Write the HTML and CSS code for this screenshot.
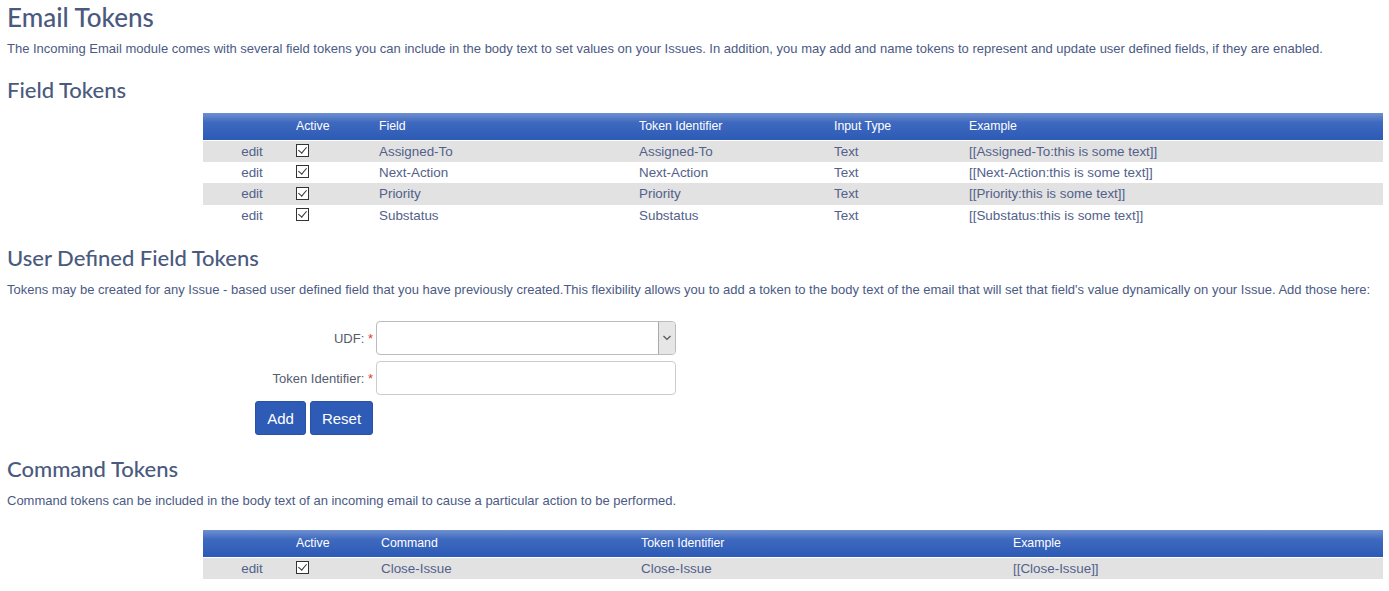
FILE: index.html
```html
<!DOCTYPE html>
<html>
<head>
<meta charset="utf-8">
<link rel="stylesheet" href="styles.css">
</head>
<body>
<div class="page">
  <h1 class="title">Email Tokens</h1>
  <p class="desc">The Incoming Email module comes with several field tokens you can include in the body text to set values on your Issues. In addition, you may add and name tokens to represent and update user defined fields, if they are enabled.</p>

  <h2 class="subtitle">Field Tokens</h2>
  <table class="grid grid-fields">
    <thead>
      <tr><th class="c-edit"></th><th class="c-active">Active</th><th class="c-field">Field</th><th class="c-token">Token Identifier</th><th class="c-type">Input Type</th><th>Example</th></tr>
    </thead>
    <tbody>
      <tr class="alt"><td class="c-edit">edit</td><td class="c-active"><span class="chk"></span></td><td>Assigned-To</td><td>Assigned-To</td><td>Text</td><td>[[Assigned-To:this is some text]]</td></tr>
      <tr><td class="c-edit">edit</td><td class="c-active"><span class="chk"></span></td><td>Next-Action</td><td>Next-Action</td><td>Text</td><td>[[Next-Action:this is some text]]</td></tr>
      <tr class="alt"><td class="c-edit">edit</td><td class="c-active"><span class="chk"></span></td><td>Priority</td><td>Priority</td><td>Text</td><td>[[Priority:this is some text]]</td></tr>
      <tr><td class="c-edit">edit</td><td class="c-active"><span class="chk"></span></td><td>Substatus</td><td>Substatus</td><td>Text</td><td>[[Substatus:this is some text]]</td></tr>
    </tbody>
  </table>

  <h2 class="subtitle sub-udf">User Defined Field Tokens</h2>
  <p class="desc">Tokens may be created for any Issue - based user defined field that you have previously created.This flexibility allows you to add a token to the body text of the email that will set that field's value dynamically on your Issue. Add those here:</p>

  <div class="form">
    <div class="form-row">
      <label class="lbl">UDF: <span class="req">*</span></label>
      <div class="select"><span class="select-btn"><svg width="10" height="6" viewBox="0 0 10 6"><path d="M1.5 1 L5 4.5 L8.5 1" fill="none" stroke="#555" stroke-width="1.2"/></svg></span></div>
    </div>
    <div class="form-row">
      <label class="lbl">Token Identifier: <span class="req">*</span></label>
      <div class="input"></div>
    </div>
    <div class="buttons">
      <button class="btn btn-add">Add</button>
      <button class="btn btn-reset">Reset</button>
    </div>
  </div>

  <h2 class="subtitle sub-cmd">Command Tokens</h2>
  <p class="desc">Command tokens can be included in the body text of an incoming email to cause a particular action to be performed.</p>

  <table class="grid grid-cmd">
    <thead>
      <tr><th class="c-edit"></th><th class="c-active2">Active</th><th class="c-cmd">Command</th><th class="c-token2">Token Identifier</th><th>Example</th></tr>
    </thead>
    <tbody>
      <tr class="alt"><td class="c-edit">edit</td><td class="c-active2"><span class="chk"></span></td><td>Close-Issue</td><td>Close-Issue</td><td>[[Close-Issue]]</td></tr>
    </tbody>
  </table>
</div>
</body>
</html>
```

FILE: styles.css
```css
* { box-sizing: border-box; }
html, body { margin: 0; padding: 0; background: #fff; }
body {
  font-family: "Liberation Sans", Arial, sans-serif;
  font-size: 13px;
  color: #4b5a85;
}
.page { padding: 0 7px; }
.title {
  font-family: Lato, "Liberation Sans", sans-serif;
  font-weight: 500;
  font-size: 26px;
  color: #4a5a7e;
  margin: 0;
  padding-top: 2px;
  line-height: 30px;
}
.subtitle {
  font-family: Lato, "Liberation Sans", sans-serif;
  font-weight: 500;
  font-size: 22px;
  color: #4a5a7e;
  margin: 0;
  line-height: 26px;
}
.desc {
  margin: 0;
  line-height: 16px;
  font-size: 13px;
  color: #4b5a85;
}
.title + .desc { margin-top: 9px; }
.desc + .subtitle { margin-top: 20px; }
.grid {
  border-collapse: collapse;
  width: 1180px;
  margin-left: 196px;
  font-size: 13.4px;
  color: #52618a;
}
.grid-fields { margin-top: 10px; }
.grid th {
  height: 27px;
  text-align: left;
  font-weight: normal;
  color: #fff;
  font-size: 12.3px;
  background: linear-gradient(to bottom, #6f90d0 0%, #3e69bf 35%, #2c5ab5 100%);
  background-clip: padding-box;
  padding: 0;
  border-bottom: 1px solid #fff;
}
.grid td {
  height: 21.5px;
  padding: 0;
  vertical-align: middle;
}
.grid tr.alt td { background: #e2e2e2; }
.grid td.c-edit, .grid th.c-edit { width: 93px; text-align: center; padding-left: 5px; }
.c-active { width: 83px; }
.c-field { width: 260px; }
.c-token { width: 195px; }
.c-type { width: 135px; }
.c-active2 { width: 85px; }
.c-cmd { width: 260px; }
.c-token2 { width: 372px; }
.chk {
  display: inline-block;
  width: 13px;
  height: 13px;
  border: 1px solid #333;
  background: #fff;
  position: relative;
  vertical-align: middle;
  margin-top: -3px;
}
.chk::after {
  content: "";
  position: absolute;
  left: 3px;
  top: 0px;
  width: 4px;
  height: 7px;
  border-right: 1.5px solid #333;
  border-bottom: 1.5px solid #333;
  transform: rotate(40deg);
}
.sub-udf { margin-top: 19px; }
.subtitle + .desc { margin-top: 11px; }
.form { margin-top: 23px; }
.form-row {
  display: flex;
  align-items: center;
  margin-bottom: 6px;
}
.lbl {
  width: 369px;
  text-align: right;
  padding-right: 3px;
  font-size: 13px;
  color: #555c6e;
}
.req { color: #e53935; }
.select, .input {
  width: 300px;
  height: 34px;
  border: 1px solid #ccc;
  border-radius: 4px;
  background: #fff;
  position: relative;
}
.select-btn {
  position: absolute;
  right: 0;
  top: 0;
  bottom: 0;
  width: 17px;
  background: #e6e6e6;
  border-left: 1px solid #aaa;
  border-radius: 0 3px 3px 0;
  display: flex;
  align-items: center;
  justify-content: center;
}
.select { border-color: #bbb; }
.buttons {
  display: flex;
  gap: 4px;
  padding-left: 248px;
}
.btn {
  height: 34px;
  border: 1px solid #2a50a8;
  border-radius: 3px;
  background: #2d5bb5;
  color: #fff;
  font-family: "Liberation Sans", Arial, sans-serif;
  font-size: 15px;
  padding: 0;
}
.btn-add { width: 51px; }
.btn-reset { width: 63px; }
.sub-cmd { margin-top: 21px; }
.grid-cmd { margin-top: 21px; }
```
